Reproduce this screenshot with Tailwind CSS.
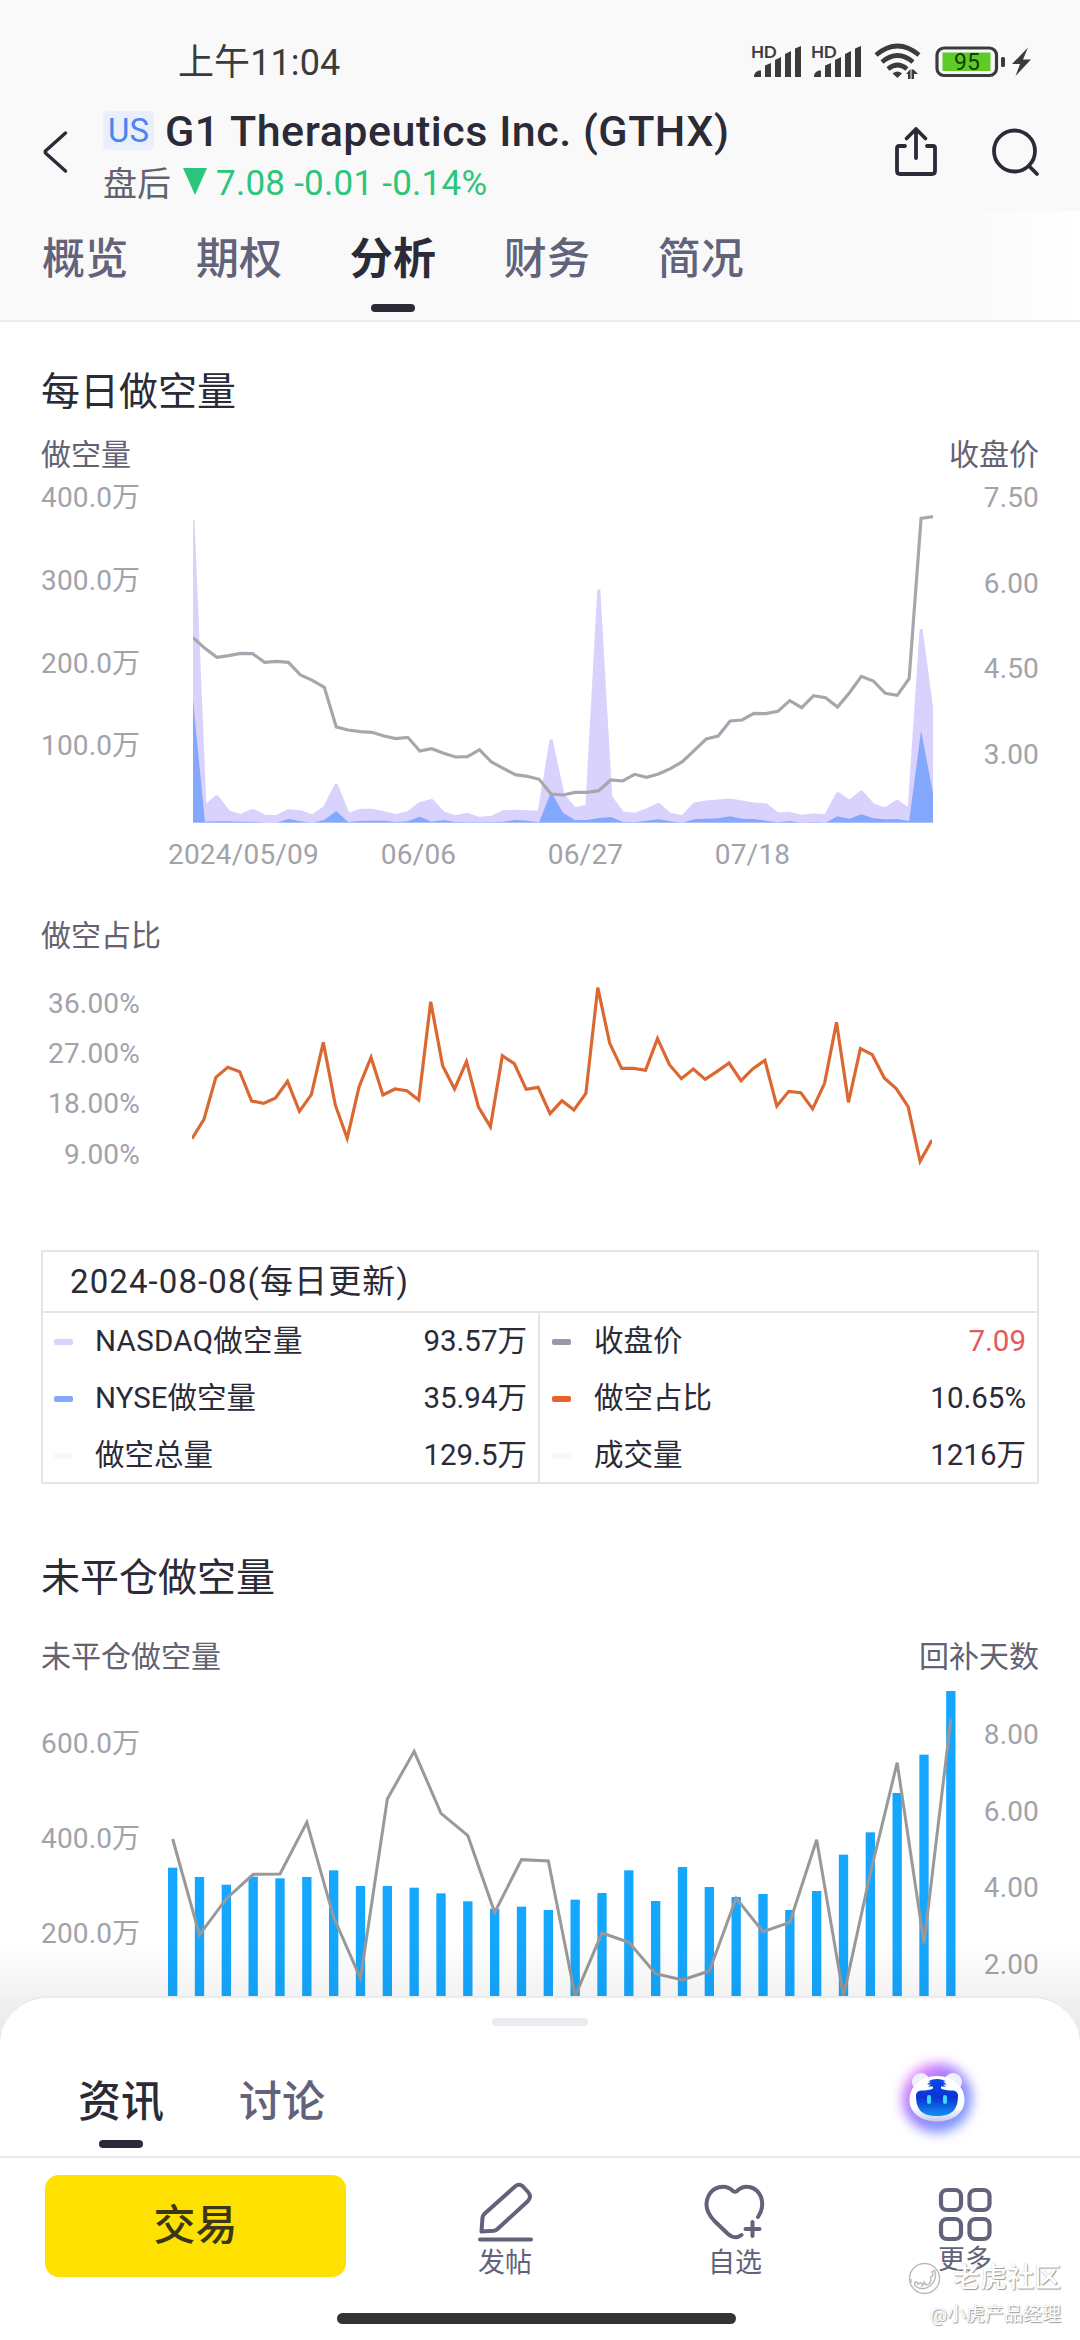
<!DOCTYPE html>
<html lang="zh-CN">
<head>
    <meta charset="UTF-8">
    <meta name="viewport" content="width=device-width, initial-scale=1.0">
    <title>G1 Therapeutics Inc. (GTHX)</title>
    <script src="https://cdn.jsdelivr.net/npm/@tailwindcss/browser@4"></script>
    <style>
        body {
            font-family: Roboto, 'Noto Sans CJK SC', sans-serif;
        }
    </style>
</head>
<body class="bg-white">
<div class="w-[1080px] h-[2340px] overflow-hidden flex flex-col text-[#2b2b38]">

    <header class="h-[322px] shrink-0 bg-[#f9f9f9] border-b-2 border-[#ececee] flex flex-col">
        <!-- status bar -->
        <div class="h-[100px] pt-[22px] pl-[178px] pr-[45px] flex items-center justify-between text-[#3b3b3b]">
            <span class="pt-[4px] text-[36px] leading-[40px] tracking-[.1px]">上午11:04</span>
            <svg class="w-[284px] h-[40px]" viewBox="0 0 284 40" fill="currentColor">
                <g id="signal">
                    <text x="0" y="16.500" font-size="17" font-weight="700" font-family="Lato" letter-spacing="-.3">HD</text>
                    <path d="M3 36v-1.500q1-4 5-5h2V36zM14 24.500l6-2.500V36h-6zM24 19l6-3V36h-6zM34 13l6-3V36h-6zM44 7.500L50 5V36h-6z"/>
                </g>
                <use href="#signal" x="60"/>
                <g fill="none" stroke="currentColor" stroke-width="4.600">
                    <path d="M125 14q21.500-18 43 0"/>
                    <path d="M131 21q15.500-13 31 0"/>
                    <path d="M137 28q9.500-8 19 0"/>
                </g>
                <path d="M141.500 32.500q5-4 9.500 0L146.500 37z"/>
                <path d="M155 33l4.500-5V38h-2.500v-5zM163 28.500V38h-2.500V28.500zM163 29l4 4h-4z"/>
                <rect x="186" y="7" width="59.500" height="27.500" rx="7" fill="none" stroke="currentColor" stroke-width="3.200"/>
                <rect x="191.500" y="11.500" width="48" height="18.500" fill="#5ecb27"/>
                <text x="216" y="29" font-size="23" text-anchor="middle" fill="#173d0a">95</text>
                <rect x="250" y="16" width="4" height="10" rx="1.500"/>
                <path d="M277 6.500L261 23h8L264.500 35 280 18.500h-8z"/>
            </svg>
        </div>
        <!-- title bar -->
        <div class="h-[111px] shrink-0 flex items-center pl-[40px] pr-[40px]">
            <svg class="w-[30px] h-[44px] mt-[-8px]" viewBox="0 0 30 44" fill="none" stroke="currentColor" stroke-width="3.400" stroke-linecap="round" stroke-linejoin="round">
                <path d="M25.500 3L6 20.500q-1.500 1.500 0 3L25.500 41"/>
            </svg>
            <div class="ml-[33px] flex flex-col">
                <div class="flex items-center h-[56px]">
                    <span class="w-[51px] h-[39px] rounded-[5px] bg-[#e9effb] text-[#4d84f2] text-[33px] leading-[40px] text-center">US</span>
                    <h1 class="ml-[11px] text-[43px] leading-[56px] tracking-[.520px] font-medium whitespace-nowrap">G1 Therapeutics Inc. (GTHX)</h1>
                </div>
                <div class="flex items-center h-[50px]">
                    <span class="text-[34px] leading-[50px] text-[#62626f]">盘后</span>
                    <svg class="ml-[12px] w-[24px] h-[27px] mt-[-4px]" viewBox="0 0 24 27" fill="#2bc57c"><path d="M0 0h24L12 27z"/></svg>
                    <span class="ml-[9px] text-[35px] leading-[50px] tracking-[.250px] text-[#2bc57c] whitespace-nowrap">7.08 -0.01 -0.14%</span>
                </div>
            </div>
            <div class="ml-auto mt-[-8px] flex gap-[54px]">
                <svg class="w-[44px] h-[52px]" viewBox="0 0 44 52" fill="none" stroke="currentColor" stroke-width="3.800" stroke-linecap="round" stroke-linejoin="round">
                    <path d="M11 20H5q-2 0-2 2V45q0 3 3 3H38q3 0 3-3V22q0-2-2-2H33M22 32V3M12.500 12.500L22 3l9.500 9.500"/>
                </svg>
                <svg class="w-[48px] h-[52px]" viewBox="0 0 48 52" fill="none" stroke="currentColor" stroke-width="3.800" stroke-linecap="round">
                    <circle cx="22.500" cy="25" r="20.500"/>
                    <path d="M37 40l8 8"/>
                </svg>
            </div>
        </div>
        <nav class="relative grow pl-[42px] pt-[16px] flex gap-[67.500px] text-[43px] leading-[64px] tracking-[.200px] text-[#62627a] font-medium bg-linear-to-r from-transparent from-88% to-white">
            <span>概览</span>
            <span>期权</span>
            <span class="relative text-[#2b2b38] font-bold">分析
                <i class="absolute left-[21px] top-[77px] w-[44px] h-[8px] rounded-full bg-[#2b2b38]"></i>
            </span>
            <span>财务</span>
            <span>简况</span>
        </nav>
    </header>

    <main class="relative h-[1674px] shrink-0 overflow-hidden pt-[40px]">
        <h2 class="pl-[41px] text-[39px] leading-[60px]">每日做空量</h2>
        <div class="mt-[13px] px-[41px] flex justify-between text-[30px] leading-[40px] text-[#626272]">
            <span>做空量</span>
            <span>收盘价</span>
        </div>
        <div class="mt-[-1px] flex justify-between px-[41px] text-[28px] leading-[28px] tracking-[.150px] text-[#a2a2ab]">
            <div class="w-[151px] pt-[10px] flex flex-col gap-[54.800px]">
                <span>400.0万</span><span>300.0万</span><span>200.0万</span><span>100.0万</span>
            </div>
            <svg class="w-[740px] h-[352px]" viewBox="0 -48 2220 1056" fill="none">
                <clipPath id="plot"><rect x="0" y="-48" width="2220" height="1046"/></clipPath>
                <g clip-path="url(#plot)">
                    <polygon id="nasdaq" fill="#d9d2fd" stroke="#d9d2fd" stroke-width="9" stroke-linejoin="bevel"/>
                    <polygon id="nyse" fill="#84a8fd"/>
                    <polyline id="close" stroke="#a6a6ae" stroke-width="9.500"/>
                </g>
            </svg>
            <div class="w-[106px] pt-[10px] flex flex-col gap-[57.600px] text-right">
                <span>7.50</span><span>6.00</span><span>4.50</span><span>3.00</span>
            </div>
        </div>
        <div class="pt-[15px] pl-[168px] flex text-[28px] leading-[28px] tracking-[.200px] text-[#a2a2ab]">
            <span class="w-[167px]">2024/05/09</span>
            <span class="w-[167px] text-center">06/06</span>
            <span class="w-[167px] text-center">06/27</span>
            <span class="w-[167px] text-center">07/18</span>
        </div>

        <div class="mt-[47px] pl-[41px] text-[30px] leading-[40px] text-[#626272]">做空占比</div>
        <div class="mt-[-1px] flex pl-[41px] text-[28px] leading-[28px] tracking-[.200px] text-[#a2a2ab]">
            <div class="w-[99px] pt-[35px] flex flex-col gap-[22.200px] text-right">
                <span>36.00%</span><span>27.00%</span><span>18.00%</span><span>9.00%</span>
            </div>
            <svg class="ml-[52px] w-[740px] h-[225px]" viewBox="0 -15 2220 675" fill="none">
                <polyline id="ratio" stroke="#db6731" stroke-width="9.500"/>
            </svg>
        </div>

        <!-- daily figures -->
        <div class="mt-[70px] mx-[41px] h-[234px] border-2 border-[#e5e5e6] text-[29.500px]">
            <div class="h-[61px] pl-[27px] border-b-2 border-[#e5e5e6] text-[33px] leading-[60px] tracking-[1.100px]">2024-08-08(每日更新)</div>
            <div class="grid grid-cols-2 h-[169px]">
                <div class="pl-[11px] pr-[11px] border-r-2 border-[#e5e5e6] leading-[57px]">
                    <div class="flex items-center"><i class="w-[19px] h-[6px] rounded-[2px] bg-[#d9d4fb]"></i><span class="ml-[22px] grow tracking-[.300px]">NASDAQ做空量</span><span>93.57万</span></div>
                    <div class="flex items-center"><i class="w-[19px] h-[6px] rounded-[2px] bg-[#84a8fb]"></i><span class="ml-[22px] grow">NYSE做空量</span><span>35.94万</span></div>
                    <div class="flex items-center"><i class="w-[19px] h-[6px] rounded-[2px] bg-[#f8f8f8]"></i><span class="ml-[22px] grow">做空总量</span><span>129.5万</span></div>
                </div>
                <div class="pl-[12px] pr-[11px] leading-[57px]">
                    <div class="flex items-center"><i class="w-[19px] h-[6px] rounded-[2px] bg-[#9599a9]"></i><span class="ml-[23px] grow">收盘价</span><span class="text-[#e4595c]">7.09</span></div>
                    <div class="flex items-center"><i class="w-[19px] h-[6px] rounded-[2px] bg-[#e8632a]"></i><span class="ml-[23px] grow">做空占比</span><span>10.65%</span></div>
                    <div class="flex items-center"><i class="w-[19px] h-[6px] rounded-[2px] bg-[#f8f8f8]"></i><span class="ml-[23px] grow">成交量</span><span>1216万</span></div>
                </div>
            </div>
        </div>

        <h2 class="mt-[64px] pl-[41px] text-[39px] leading-[60px]">未平仓做空量</h2>
        <div class="mt-[29px] px-[41px] flex justify-between text-[30px] leading-[40px] text-[#626272]">
            <span>未平仓做空量</span>
            <span>回补天数</span>
        </div>
        <div class="mt-[-1px] flex justify-between px-[41px] text-[28px] leading-[28px] tracking-[.150px] text-[#a2a2ab]">
            <div class="w-[119px] pt-[54px] flex flex-col gap-[67px]">
                <span>600.0万</span><span>400.0万</span><span>200.0万</span>
            </div>
            <svg class="grow h-[320px]" viewBox="30 18 2400 960" preserveAspectRatio="xMinYMin meet" fill="none">
                <g id="bars" fill="#15a7fe"></g>
                <polyline id="days" stroke="#999" stroke-width="9"/>
            </svg>
            <div class="w-[70px] pt-[45px] flex flex-col gap-[48.500px] text-right">
                <span>8.00</span><span>6.00</span><span>4.00</span><span>2.00</span>
            </div>
        </div>
        <div class="absolute inset-x-0 bottom-0 h-[56px] bg-linear-to-b from-transparent to-black/5"></div>
    </main>

    <!-- news sheet -->
    <div class="h-[160px] shrink-0 bg-linear-to-b from-[#f1f1f1] to-[#e8e8e8] to-30%">
        <section class="relative h-[160px] rounded-t-[48px] bg-white border-t-2 border-[#ebebeb] pl-[78px] flex gap-[75px] text-[43px] font-medium">
            <i class="absolute left-[492px] top-[20px] w-[96px] h-[8px] rounded-full bg-[#ebebf0]"></i>
            <span class="relative pt-[72px] leading-[64px]">资讯
                <i class="absolute left-[21px] top-[142px] w-[44px] h-[8px] rounded-full bg-[#2b2b38]"></i>
            </span>
            <span class="pt-[72px] leading-[64px] text-[#62627a]">讨论</span>
            <svg class="ml-auto mr-[79px] mt-[40px] w-[130px] h-[118px]" viewBox="0 0 130 118">
                <defs>
                    <filter id="glow" x="-50%" y="-50%" width="200%" height="200%"><feGaussianBlur stdDeviation="6"/></filter>
                    <linearGradient id="halo" x1=".1" y1=".1" x2=".75" y2=".8">
                        <stop offset="0" stop-color="#ff8cf5"/><stop offset=".4" stop-color="#a878ff"/><stop offset="1" stop-color="#7d95ff"/>
                    </linearGradient>
                    <linearGradient id="visor" x1="0" y1="0" x2="0" y2="1">
                        <stop offset="0" stop-color="#0c4be8"/><stop offset=".5" stop-color="#0a33d4"/><stop offset="1" stop-color="#1191f2"/>
                    </linearGradient>
                    <linearGradient id="fur" x1="0" y1="0" x2="0" y2="1">
                        <stop offset=".7" stop-color="#fff"/><stop offset="1" stop-color="#c9cbe6"/>
                    </linearGradient>
                </defs>
                <circle cx="66" cy="60" r="35" fill="url(#halo)" filter="url(#glow)"/>
                <circle cx="50" cy="44" r="9" fill="#f1effa"/>
                <circle cx="82" cy="44" r="9" fill="#f1effa"/>
                <path d="M66 38C84 38 93.500 50 93.500 62S83 83.500 66 83.500 38.500 74 38.500 62 48 38 66 38z" fill="url(#fur)"/>
                <path d="M45 57q.5-4 5-4.500 8 0 12-2v-2h-5l3-2h-4l4-3h-3q3-2.500 9-2.500t9 2.500h-3l4 3h-4l3 2h-5v2q4 2 12 2 4.500.5 5 4.500C87 71 82 78 66 78S45 71 45 57z" fill="url(#visor)"/>
                <rect x="56" y="57" width="4" height="9" rx="2" fill="#3fd8ff"/>
                <rect x="72" y="57" width="4" height="9" rx="2" fill="#3fd8ff"/>
            </svg>
        </section>
    </div>

    <footer class="relative h-[184px] shrink-0 bg-white border-t-2 border-[#e9e9eb] flex text-[#62627a]">
        <button class="ml-[45px] mt-[17px] w-[301px] h-[102px] rounded-[14px] bg-[#fee100] text-[#3a3617] text-[42px] leading-[102px] font-medium">交易</button>
        <div class="ml-[44px] grow flex">
            <div class="w-[230px] flex flex-col items-center text-[27px] leading-[34px]">
                <svg class="mt-[21px] w-[64px] h-[67px]" viewBox="0 0 64 67" fill="none" stroke="currentColor" stroke-width="4" stroke-linecap="round" stroke-linejoin="round">
                    <path d="M8.500 52.500l1-14q.3-2 2-3.700L42 7.500q4-3.500 8 0l5 5.500q4 4.500 0 9L24.500 50q-1.500 1.500-3.500 1.700zM7 60.500H58"/>
                </svg>
                <span>发帖</span>
            </div>
            <div class="w-[230px] flex flex-col items-center text-[27px] leading-[34px]">
                <svg class="mt-[21px] w-[64px] h-[67px]" viewBox="0 0 64 67" fill="none" stroke="currentColor" stroke-width="4" stroke-linecap="round" stroke-linejoin="round">
                    <path d="M38.500 56Q32 61 25 55L11.500 42C3 33 2 25 5 18 9 8 22 4 30 12q2 1.500 4 0C42 4 54 8 58 18q3.500 10-3 20M49.500 43V57M42.500 50H56.500"/>
                </svg>
                <span>自选</span>
            </div>
            <div class="w-[230px] flex flex-col items-center text-[27px] leading-[34px]">
                <svg class="mt-[21px] w-[64px] h-[64px]" viewBox="0 0 64 64" fill="none" stroke="currentColor" stroke-width="4.200">
                    <rect x="8" y="11" width="20" height="20" rx="6"/>
                    <rect x="36.500" y="11" width="20" height="20" rx="6"/>
                    <rect x="8" y="40" width="20" height="20" rx="6"/>
                    <rect x="36.500" y="40" width="20" height="20" rx="6"/>
                </svg>
                <span>更多</span>
            </div>
        </div>
        <i class="absolute left-[337px] top-[155px] w-[399px] h-[11px] rounded-full bg-[#333]"></i>
        <!-- community watermark -->
        <div class="absolute right-[19px] top-[100px] flex flex-col items-end text-white [text-shadow:1px_1px_1px_#999,0_0_1px_#bbb]">
            <div class="flex items-center gap-[12px] text-[27px] leading-[40px] font-medium">
                <svg class="w-[33px] h-[33px]" viewBox="0 0 33 33" fill="#fff" stroke="#b9b9be" stroke-width="1.400">
                    <circle cx="16.500" cy="16.500" r="15"/>
                    <path d="M3 17v4M7 24q-1-4 1-4t2 3q1-3 3-2t1 3q2-1 2-4 1 1 2 3 5-1 5-6-1-2 1-3t0-4q3-3 3 0 2 7-4 13-8 7-16 1z"/>
                </svg>
                <span>老虎社区</span>
            </div>
            <span class="text-[19px] leading-[34px]">@小虎产品经理</span>
        </div>
    </footer>
</div>

<script>
    // chart values are plot offsets from the top, three units per pixel
    const BASE = 998;
    const close = [443,475,502,497,490,491,517,514,517,555,571,592,711,720,725,727,738,746,742,783,776,790,801,800,779,816,835,854,859,868,912,915,907,907,902,870,873,853,862,852,836,815,781,747,738,693,690,670,671,664,632,653,617,623,651,608,559,573,610,616,566,85,80];
    const nasdaq = [90,950,919,966,976,961,978,980,962,965,978,953,884,973,961,961,968,977,968,941,931,969,980,973,985,982,965,964,965,967,749,914,957,948,299,921,969,973,960,943,973,980,942,936,933,930,936,942,944,972,970,979,975,977,910,934,905,945,957,933,959,417,684];
    const nyse = [630,995,994,994,995,995,998,998,987,994,998,990,963,996,993,992,992,996,994,980,995,990,996,997,997,997,995,990,992,997,905,968,990,990,984,981,995,997,992,988,994,998,988,986,985,979,986,987,992,997,993,998,996,998,979,986,973,985,988,987,993,722,910];
    const ratio = [536,478,352,322,335,423,430,414,364,454,404,247,434,535,380,292,405,387,392,420,125,317,387,305,441,500,287,311,388,382,461,422,450,400,83,250,325,325,331,236,314,356,327,358,334,309,362,326,301,438,394,398,447,370,187,427,266,284,354,386,440,604,540];
    const shares = [593,621,644,620,625,621,601,648,648,653,670,694,717,710,720,689,669,601,693,591,651,681,672,720,663,554,487,369,254,63];
    const days = [507,795,686,613,612,457,742,925,387,244,430,497,727,569,573,978,789,817,911,930,903,685,785,757,509,978,610,278,820,148];

    function points(values, start, step) {
        return values.map((v, i) => (start + i * step).toFixed(1) + ',' + v).join(' ');
    }
    function draw(id, pts) {
        document.getElementById(id).setAttribute('points', pts);
    }

    const step = 2220 / 62;
    draw('close', points(close, 0, step));
    draw('nasdaq', '0,' + BASE + ' ' + points(nasdaq, 0, step) + ' 2220,' + BASE);
    draw('nyse', '0,' + BASE + ' ' + points(nyse, 0, step) + ' 2220,' + BASE);
    draw('ratio', points(ratio, 0, step));
    draw('days', points(days, 68, 80.5));

    document.getElementById('bars').innerHTML = shares.map((v, i) =>
        `<rect x="${54 + i * 80.5}" y="${v}" width="28" height="${978 - v}"/>`
    ).join('');
</script>
</body>
</html>
